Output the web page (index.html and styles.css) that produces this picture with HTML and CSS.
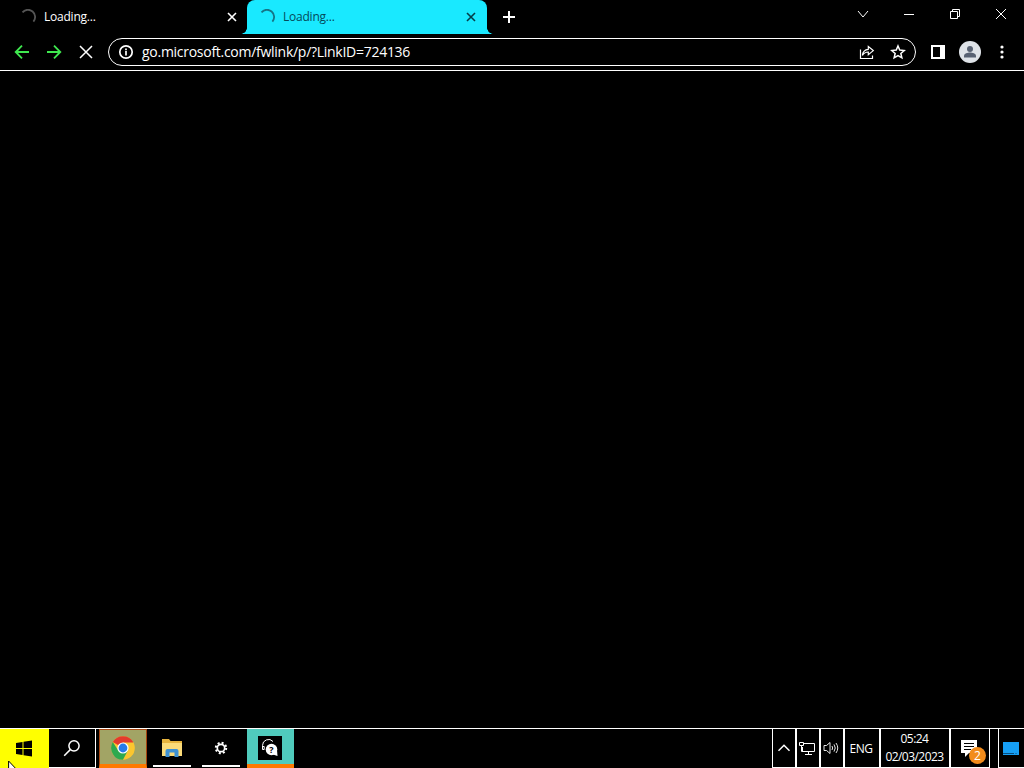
FILE: index.html
```html
<!DOCTYPE html>
<html lang="en">
<head>
  <meta charset="UTF-8" />
  <meta name="viewport" content="width=device-width, initial-scale=1.0"/>
  <title>Loading...</title>
  <link rel="stylesheet" href="styles.css">
</head>
<body>

  <!-- Tab strip -->
  <header class="tab-strip">
    <div class="tab">
      <svg class="spinner" width="16" height="16" viewBox="0 0 16 16"><path d="M2.500 3.300A7 7 0 0 1 13.400 12.600"/></svg>
      <span class="tab-title">Loading...</span>
      <svg class="tab-close" width="10" height="10" viewBox="0 0 10 10"><path d="M1 1l8 8M9 1L1 9"/></svg>
    </div>
    <div class="tab active">
      <svg class="spinner" width="16" height="16" viewBox="0 0 16 16"><path d="M2.500 3.300A7 7 0 0 1 13.400 12.600"/></svg>
      <span class="tab-title">Loading...</span>
      <svg class="tab-close" width="10" height="10" viewBox="0 0 10 10"><path d="M1 1l8 8M9 1L1 9"/></svg>
    </div>
    <svg class="new-tab" width="12" height="12" viewBox="0 0 12 12"><path d="M6 0v12M0 6h12"/></svg>
    <div class="window-controls">
      <button><svg width="12" height="12" viewBox="0 0 12 12"><path d="M1 3l5 6 5-6"/></svg></button>
      <button><svg width="12" height="12" viewBox="0 0 12 12"><path d="M1 6.500h10"/></svg></button>
      <button><svg width="12" height="12" viewBox="0 0 12 12"><path d="M1.500 3.500h7v7h-7zM3.500 3V1.500h7v7H9"/></svg></button>
      <button><svg width="12" height="12" viewBox="0 0 12 12"><path d="M1 1l10 10M11 1L1 11"/></svg></button>
    </div>
  </header>

  <!-- Toolbar -->
  <nav class="toolbar">
    <button class="nav-btn green"><svg width="16" height="16" viewBox="0 0 16 16"><path d="M15 8H2M8 1.700L1.700 8 8 14.300"/></svg></button>
    <button class="nav-btn green"><svg width="16" height="16" viewBox="0 0 16 16"><path d="M1 8h13M8 1.700L14.300 8 8 14.300"/></svg></button>
    <button class="nav-btn"><svg class="stop" width="16" height="16" viewBox="0 0 16 16"><path d="M2 2l12 12M14 2L2 14"/></svg></button>
    <div class="address-bar">
      <svg class="info" width="16" height="16" viewBox="0 0 16 16"><circle cx="8" cy="8" r="6.200"/><path d="M8 7v4.400M8 4.400v1.800"/></svg>
      <span class="url">go.microsoft.com/fwlink/p/?LinkID=724136</span>
      <svg class="share" width="18" height="16" viewBox="0 0 18 16"><path d="M2.500 5.500v9h12v-3"/><path d="M4.400 11.300C4.800 7.800 6.800 5.600 10.300 5.300V2.500L15.300 6.600 10.300 10.700V8C7.600 8 5.900 9 4.400 11.300z"/></svg>
      <svg class="star" width="16" height="16" viewBox="0 0 16 16"><path d="M8 2l1.750 4.100 4.450.400-3.350 2.950 1 4.350L8 11.500l-3.850 2.300 1-4.350L1.800 6.500l4.450-.400z"/></svg>
    </div>
    <button class="nav-btn"><svg width="14" height="14" viewBox="0 0 14 14"><path class="solid" d="M0 0h14v14H0zM2 2v10h7V2z"/></svg></button>
    <button class="nav-btn">
      <svg width="22" height="22" viewBox="0 0 22 22"><circle class="avatar-bg" cx="11" cy="11" r="11"/><circle class="avatar-fg" cx="11" cy="8" r="3"/><path class="avatar-fg" d="M5 16.500v-1.700c0-2 3.700-3.200 6-3.200s6 1.200 6 3.200v1.700z"/></svg>
    </button>
    <button class="nav-btn"><svg width="4" height="14" viewBox="0 0 4 14"><circle class="solid" cx="2" cy="2" r="1.600"/><circle class="solid" cx="2" cy="7" r="1.600"/><circle class="solid" cx="2" cy="12" r="1.600"/></svg></button>
  </nav>

  <main class="page"></main>

  <!-- Taskbar -->
  <footer class="taskbar">
    <div class="start">
      <svg width="16" height="17" viewBox="0 0 16 17"><path d="M0 3l6.500-1v6H0zM7.500 1.800L16 .5V8H7.500zM0 9h6.500v6L0 14zM7.500 9H16v7.500l-8.500-1.300z"/></svg>
      <svg class="cursor" width="12" height="19" viewBox="0 0 12 19"><path d="M.6 1v15.500l3.700-3.500 2.200 5.200 2-.9-2.200-5h5z"/></svg>
    </div>
    <div class="search">
      <svg width="18" height="18" viewBox="0 0 18 18"><circle cx="11" cy="6.800" r="5.100"/><path d="M7.300 10.600L1.200 16.700"/></svg>
    </div>
    <div class="app chrome">
      <svg width="24" height="24" viewBox="0 0 24 24">
        <circle cx="12" cy="12" r="11.800" fill="#fbc62f"/>
        <path d="M12 12L1.780 6.100A11.800 11.800 0 0 1 22.220 6.100L21.900 6.600H12z" fill="#e33b2e"/>
        <path d="M1.780 6.100A11.800 11.800 0 0 0 12 23.800L16.700 14.700 7.400 14.700z" fill="#2da94f"/>
        <circle cx="12" cy="12" r="5.600" fill="#fff"/>
        <circle cx="12" cy="12" r="4.400" fill="#287be8"/>
      </svg>
    </div>
    <div class="app running">
      <svg width="22" height="18" viewBox="0 0 22 18">
        <path d="M1 0h7l1.500 2H21v15H1z" fill="#e7b43e"/>
        <path d="M1 4h20v13H1z" fill="#fbdb79"/>
        <path d="M4.500 18v-6q0-2 2-2h9q2 0 2 2v6h-4v-4.500h-5V18z" fill="#3e91d3"/>
      </svg>
    </div>
    <div class="app running">
      <svg class="gear" width="14" height="14" viewBox="0 0 14 14"><circle class="teeth" cx="7" cy="7" r="5.200"/><circle cx="7" cy="7" r="3.700"/></svg>
    </div>
    <div class="app help">
      <svg width="24" height="24" viewBox="0 0 24 24">
        <path d="M0 0h24v24H0z"/>
        <path d="M4.500 11V9.500a6 6 0 0 1 10.500-4M4.500 10.500v3h1.700v-3z" fill="none" stroke="#fff"/>
        <circle cx="13.500" cy="13.500" r="5.800" fill="#fff"/>
        <path d="M15 18.500l4.500 1.500-.5-6z" fill="#fff"/>
        <text x="13.500" y="16.800" text-anchor="middle">?</text>
      </svg>
    </div>

    <div class="tray">
      <div class="cell narrow"><svg class="chevron" width="14" height="14" viewBox="0 0 14 14"><path d="M1.500 9.700L7 4.200l5.500 5.500"/></svg></div>
      <div class="cell narrow"><svg width="17" height="15" viewBox="0 0 17 15"><path d="M4.500 2.500h11v8h-12V6M9.500 10.500v3M6 13.500h7M.5 1.500h4v3h-4zM2.500 4.500v6H4"/></svg></div>
      <div class="cell narrow"><svg class="volume" width="16" height="14" viewBox="0 0 16 14"><path d="M1 4.500h2.500l3.500-3v11l-3.500-3H1zM9 5q1.300 2 0 4M11 3.400q2.500 3.600 0 7.200M13 2q3.500 5 0 10"/></svg></div>
      <div class="cell lang">ENG</div>
      <div class="cell clock"><span>05:24</span><span>02/03/2023</span></div>
      <div class="cell notify">
        <svg width="16" height="17" viewBox="0 0 16 17"><path class="solid" d="M0 0h16v13H8l-4 4v-4H0z"/><path class="lines" d="M3 3.500h10M3 6.500h10M3 9.500h7"/></svg>
        <span class="badge">2</span>
      </div>
      <div class="cell desktop"><svg width="16" height="13" viewBox="0 0 16 13"><path d="M0 0h16v13H0z" fill="#169ff5"/><path d="M0 11.500h11M12.500 11.500h1" stroke="#064f82"/></svg></div>
    </div>
  </footer>

</body>
</html>
```
FILE: styles.css
```css
* {
  box-sizing: border-box;
}

body {
  margin: 0;
  height: 768px;
  display: flex;
  flex-direction: column;
  overflow: hidden;
  background: #000;
  color: #fff;
  font-family: "Open Sans", "Noto Sans", sans-serif;
  font-size: 12px;
}

svg {
  display: block;
  flex: none;
  fill: none;
  stroke: #fff;
}

button {
  display: flex;
  align-items: center;
  justify-content: center;
  padding: 0;
  border: none;
  background: none;
}

.solid {
  fill: #fff;
  fill-rule: evenodd;
  stroke: none;
}

/* Tabs */
.tab-strip {
  display: flex;
  height: 34px;
  padding-left: 8px;
}

.tab {
  position: relative;
  display: flex;
  align-items: center;
  width: 239px;
  padding: 0 10px 0 12px;
}

.tab.active {
  width: 240px;
  padding-right: 11px;
  background: #19e9ff;
  color: #05495a;
  border-radius: 8px 8px 0 0;
}

/* curved feet of the selected tab */
.tab.active::before,
.tab.active::after {
  content: "";
  position: absolute;
  bottom: 0;
  width: 6px;
  height: 6px;
}

.tab.active::before {
  left: -6px;
  background: radial-gradient(circle at 0 0, #000 5.5px, #19e9ff 6px);
}

.tab.active::after {
  right: -6px;
  background: radial-gradient(circle at 100% 0, #000 5.5px, #19e9ff 6px);
}

.spinner {
  stroke: #555;
  stroke-width: 1.8;
}

.active .spinner {
  stroke: #167486;
}

.tab-title {
  flex: 1;
  margin-left: 8px;
  line-height: 34px;
  letter-spacing: -0.22px;
}

.tab-close {
  stroke-width: 1.6;
}

.active .tab-close {
  stroke: #053d48;
}

.new-tab {
  align-self: center;
  margin-left: 16px;
  stroke-width: 2;
}

.window-controls {
  display: flex;
  height: 28px;
  margin-left: auto;
}

.window-controls button {
  width: 46px;
}

/* Toolbar */
.toolbar {
  display: flex;
  align-items: center;
  height: 37px;
  padding: 0 6px;
  border-bottom: 1px solid #fff;
}

.nav-btn {
  width: 32px;
  height: 32px;
}

.green svg {
  stroke: #3fe84f;
  stroke-width: 1.8;
}

.stop {
  stroke-width: 1.5;
}

.address-bar {
  flex: 1;
  display: flex;
  align-items: center;
  height: 28px;
  margin: 0 6px;
  padding: 0 9px;
  border: 1px solid #fff;
  border-radius: 14px;
}

.info {
  stroke-width: 1.7;
}

.url {
  flex: 1;
  margin-left: 8px;
  font-size: 14px;
  line-height: 26px;
  letter-spacing: -0.275px;
}

.share {
  margin-right: 14px;
  stroke-width: 1.2;
}

.star {
  stroke-width: 1.5;
}

.avatar-bg {
  fill: #dfe3e8;
  stroke: none;
}

.avatar-fg {
  fill: #596273;
  stroke: none;
}

.page {
  flex: 1;
}

/* Taskbar */
.taskbar {
  display: flex;
  height: 40px;
  border-top: 1px solid #fff;
}

.start,
.search,
.app,
.cell {
  display: flex;
  align-items: center;
  justify-content: center;
}

.start {
  position: relative;
  width: 49px;
  padding-right: 1px;
  background: #ff0;
}

.start svg {
  fill: #000;
  stroke: none;
}

.start .cursor {
  position: absolute;
  left: 8px;
  top: 31px;
  fill: #fff;
  stroke: #000;
}

.search {
  width: 47px;
  margin-right: 3px;
  border-right: 1px solid #fff;
  border-bottom: 1px solid #fff;
}

.search svg {
  stroke-width: 1.5;
}

.app {
  width: 48px;
}

.app svg {
  stroke: none;
}

.chrome {
  background: #a2a465;
  border: 1px solid #a64510;
  border-bottom: 4px solid #ff7900;
  padding-top: 2px;
}

.running {
  width: 38px;
  margin: 0 5px 1px 6px;
  border-bottom: 2px solid #fff;
}

.running svg {
  margin-top: 2px;
}

.app .gear {
  stroke: #fff;
  stroke-width: 1.7;
}

.app .teeth {
  stroke-width: 2;
  stroke-dasharray: 2 2.084;
}

.help {
  width: 47px;
  margin-left: 2px;
  padding: 3px 2px 0 0;
  background: #50cbbd;
  border-bottom: 4px solid #ff7900;
}

.help svg {
  fill: #000;
}

.help text {
  font-size: 9px;
  font-weight: 700;
}

/* Notification area */
.tray {
  display: flex;
  margin-left: auto;
}

.cell {
  border: solid #fff;
  border-width: 0 0 1px 2px;
}

.narrow {
  width: 24px;
}

.narrow svg {
  margin-right: 2px;
}

.cell.narrow:first-child {
  width: 23px;
  border-left-width: 1px;
}

.narrow .chevron {
  margin-right: 0;
  stroke-width: 1.5;
}

.volume {
  stroke-width: 0.9;
}

.lang {
  width: 36px;
  padding-right: 2px;
  letter-spacing: -0.5px;
}

.clock {
  width: 70px;
  padding-right: 1px;
  flex-direction: column;
  line-height: 18px;
  letter-spacing: -0.55px;
}

.notify {
  position: relative;
  width: 41px;
  padding-right: 2px;
  border-right-width: 1px;
}

.notify .lines {
  stroke: #000;
}

.badge {
  position: absolute;
  right: 3px;
  bottom: 3px;
  width: 17px;
  height: 17px;
  border-radius: 50%;
  background: #f28c1c;
  line-height: 17px;
  text-align: center;
}

.desktop {
  width: 26px;
  margin-left: 8px;
  padding-right: 1px;
  border-left-width: 1px;
}

.desktop svg {
  stroke: none;
}
```
